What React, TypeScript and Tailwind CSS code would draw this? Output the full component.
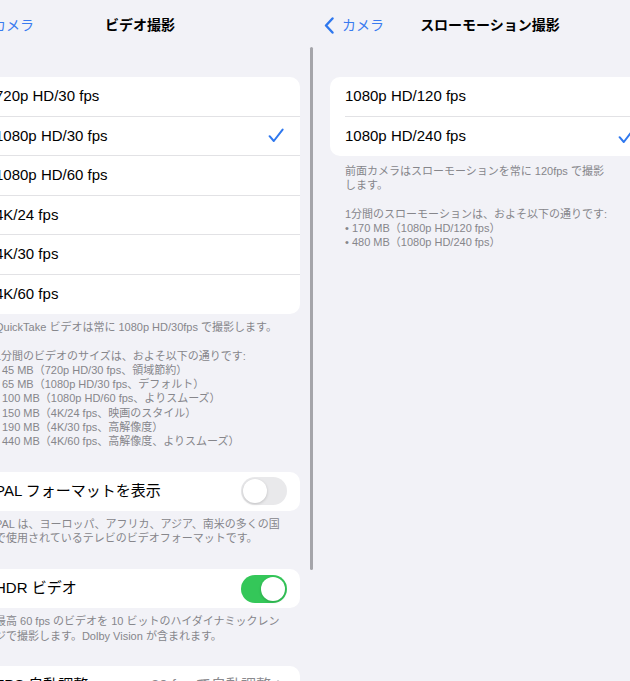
import { ReactNode } from 'react'

const font = "font-['Liberation_Sans','Noto_Sans_CJK_JP',sans-serif]"

function BackChevron() {
  return (
    <svg width="10" height="17" viewBox="0 0 10 17" className="shrink-0">
      <path d="M8.5 1.5 L2 8.5 L8.5 15.5" stroke="#2f78ee" strokeWidth="2.4" fill="none" strokeLinecap="round" strokeLinejoin="round" />
    </svg>
  )
}

function Check() {
  return (
    <svg width="16" height="15" viewBox="0 0 16 15" className="shrink-0">
      <path d="M1.6 8.2 L5.8 13 L14.6 1.6" stroke="#2f78ee" strokeWidth="2" fill="none" strokeLinecap="round" strokeLinejoin="round" />
    </svg>
  )
}

function NavBar({ title }: { title: string }) {
  return (
    <div className="grid h-[50px] grid-cols-[1fr_auto_1fr] items-center">
      <div className="flex items-center gap-[8px] pl-[14px]">
        <BackChevron />
        <span className="text-[14px] text-[#3a7bf0]">カメラ</span>
      </div>
      <div className="text-[14px] font-bold text-black">{title}</div>
      <div />
    </div>
  )
}

function Card({ children, className = '' }: { children: ReactNode; className?: string }) {
  return <div className={`mx-5 overflow-hidden rounded-[10px] bg-white ${className}`}>{children}</div>
}

function OptionRow({ label, checked, last }: { label: string; checked?: boolean; last?: boolean }) {
  return (
    <div className="flex h-[39.5px] items-center pl-[15px]">
      <div
        className={`flex h-full flex-1 items-center justify-between pr-4 ${last ? '' : 'border-b border-[#e2e2e5]'}`}
      >
        <span className="text-[15px] text-black">{label}</span>
        {checked && <Check />}
      </div>
    </div>
  )
}

function Toggle({ on }: { on: boolean }) {
  return (
    <div
      className={`flex h-[28px] w-[46px] items-center rounded-full p-[2px] ${
        on ? 'justify-end bg-[#34c759]' : 'justify-start bg-[#e9e9eb]'
      }`}
    >
      <div className="h-[24px] w-[24px] rounded-full bg-white shadow-[0_1px_3px_rgba(0,0,0,0.18)]" />
    </div>
  )
}

function ToggleRow({ label, on }: { label: string; on: boolean }) {
  return (
    <Card>
      <div className="flex h-[39.5px] items-center justify-between pl-[15px] pr-[13px]">
        <span className="text-[15px] text-black">{label}</span>
        <Toggle on={on} />
      </div>
    </Card>
  )
}

function Footer({ lines, className = '' }: { lines: string[]; className?: string }) {
  return (
    <div className={`px-[35px] pt-[6px] text-[11px] leading-[14.3px] text-[#86868b] ${className}`}>
      {lines.map((line, i) => (
        <div key={i} className="h-[14.3px] whitespace-nowrap">
          {line}
        </div>
      ))}
    </div>
  )
}

const videoFormats = [
  '720p HD/30 fps',
  '1080p HD/30 fps',
  '1080p HD/60 fps',
  '4K/24 fps',
  '4K/30 fps',
  '4K/60 fps',
]

const slomoFormats = ['1080p HD/120 fps', '1080p HD/240 fps']

function VideoRecording() {
  return (
    <div className="relative -ml-[40px] w-[360px] shrink-0">
      <NavBar title="ビデオ撮影" />
      <Card className="mt-[27px]">
        {videoFormats.map((f, i) => (
          <OptionRow key={f} label={f} checked={i === 1} last={i === videoFormats.length - 1} />
        ))}
      </Card>
      <Footer
        lines={[
          'QuickTake ビデオは常に 1080p HD/30fps で撮影します。',
          '',
          '1分間のビデオのサイズは、およそ以下の通りです:',
          '• 45 MB（720p HD/30 fps、領域節約）',
          '• 65 MB（1080p HD/30 fps、デフォルト）',
          '• 100 MB（1080p HD/60 fps、よりスムーズ）',
          '• 150 MB（4K/24 fps、映画のスタイル）',
          '• 190 MB（4K/30 fps、高解像度）',
          '• 440 MB（4K/60 fps、高解像度、よりスムーズ）',
        ]}
      />
      <div className="mt-[23px]">
        <ToggleRow label="PAL フォーマットを表示" on={false} />
      </div>
      <Footer
        lines={['PAL は、ヨーロッパ、アフリカ、アジア、南米の多くの国', 'で使用されているテレビのビデオフォーマットです。']}
      />
      <div className="mt-[23px]">
        <ToggleRow label="HDR ビデオ" on />
      </div>
      <Footer
        lines={['最高 60 fps のビデオを 10 ビットのハイダイナミックレン', 'ジで撮影します。Dolby Vision が含まれます。']}
      />
      <Card className="mt-[23px]">
        <div className="flex h-[39.5px] items-center justify-between pl-[15px] pr-4">
          <span className="text-[15px] text-black">FPS 自動調整</span>
          <span className="flex items-center gap-[6px] text-[15px] text-[#8a8a8e]">
            30 fps で自動調整
            <svg width="7" height="12" viewBox="0 0 7 12">
              <path d="M1 1 L6 6 L1 11" stroke="#c4c4c7" strokeWidth="1.8" fill="none" strokeLinecap="round" strokeLinejoin="round" />
            </svg>
          </span>
        </div>
      </Card>

      {/* scroll indicator */}
      <div className="absolute left-[350px] top-[47px] z-10 h-[523px] w-[3px] rounded-full bg-[#a5a5aa]" />
    </div>
  )
}

function SlowMotion() {
  return (
    <div className="-ml-[10px] w-[360px] shrink-0">
      <NavBar title="スローモーション撮影" />
      <Card className="mt-[27px]">
        {slomoFormats.map((f, i) => (
          <OptionRow key={f} label={f} checked={i === 1} last={i === slomoFormats.length - 1} />
        ))}
      </Card>
      <Footer
        className="pt-[8px]"
        lines={[
          '前面カメラはスローモーションを常に 120fps で撮影',
          'します。',
          '',
          '1分間のスローモーションは、およそ以下の通りです:',
          '• 170 MB（1080p HD/120 fps）',
          '• 480 MB（1080p HD/240 fps）',
        ]}
      />
    </div>
  )
}

export default function App() {
  return (
    <div className={`flex h-[681px] w-[630px] overflow-hidden bg-[#f2f2f7] ${font}`}>
      <VideoRecording />
      <SlowMotion />
    </div>
  )
}
